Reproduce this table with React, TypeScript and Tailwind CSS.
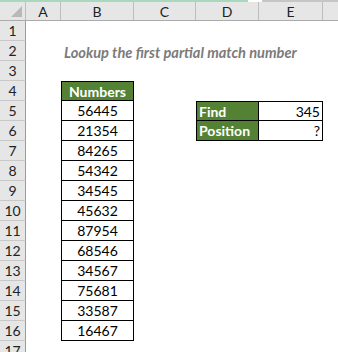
import React from 'react';

const numbers = ['56445', '21354', '84265', '54342', '34545', '45632', '87954', '68546', '34567', '75681', '33587', '16467'];

const font = { fontFamily: 'Lato, "Open Sans", sans-serif' };

function RowHead({ n }: { n: number }) {
  return (
    <div className="w-[26px] shrink-0 h-full flex items-center justify-center bg-[#e6e6e6] border-r border-b border-r-[#9b9b9b] border-b-[#c8c8c8] text-[14px] text-[#222]">
      {n}
    </div>
  );
}

export default function App() {
  const rows = Array.from({ length: 17 }, (_, i) => i + 1);

  return (
    <div className="w-[338px] h-[352px] overflow-hidden bg-white" style={font}>
      {/* top strip */}
      <div className="flex h-[2px]">
        <div className="w-[248px] bg-[#a9d8bd]" />
        <div className="w-[14px] bg-white" />
        <div className="flex-1 bg-[#c6c6c6]" />
      </div>

      {/* column header */}
      <div className="flex h-[19px] bg-[#e6e6e6] border-b border-[#ababab] text-[14px] text-[#222]">
        <div className="w-[26px] shrink-0 border-r border-[#bdbdbd] relative">
          <svg className="absolute right-[3px] bottom-[3px]" width="11" height="11" viewBox="0 0 11 11">
            <polygon points="11,0 11,11 0,11" fill="#b8b8b8" />
          </svg>
        </div>
        <div className="w-[35px] shrink-0 border-r border-[#bdbdbd] flex items-center justify-center">A</div>
        <div className="w-[73px] shrink-0 border-r border-[#bdbdbd] flex items-center justify-center">B</div>
        <div className="w-[62px] shrink-0 border-r border-[#bdbdbd] flex items-center justify-center">C</div>
        <div className="w-[63px] shrink-0 border-r border-[#bdbdbd] flex items-center justify-center">D</div>
        <div className="w-[64px] shrink-0 border-r border-[#bdbdbd] flex items-center justify-center">E</div>
        <div className="flex-1" />
      </div>

      {rows.map((n) => {
        const num = n >= 5 && n <= 16 ? numbers[n - 5] : null;
        return (
          <div key={n} className="flex h-[20px] text-[14px] text-black">
            <RowHead n={n} />
            {/* A */}
            <div className="w-[35px] shrink-0" />
            {/* B */}
            {n === 4 ? (
              <div className="w-[73px] shrink-0 h-full border border-black bg-[#548235] text-white font-bold flex items-center justify-center">
                Numbers
              </div>
            ) : num ? (
              <div className="w-[73px] shrink-0 h-full border-x border-b border-black flex items-center justify-center">
                {num}
              </div>
            ) : (
              <div className="w-[73px] shrink-0 relative">
                {n === 2 && (
                  <span className="absolute left-[3px] top-[1px] whitespace-nowrap italic font-bold text-[14.6px] text-[#7b7b7b]">
                    Lookup the first partial match number
                  </span>
                )}
              </div>
            )}
            {/* C */}
            <div className="w-[62px] shrink-0" />
            {/* D & E */}
            {n === 5 || n === 6 ? (
              <>
                <div
                  className={`w-[63px] shrink-0 h-full bg-[#548235] text-white font-bold flex items-center pl-[2px] border-x border-b border-black ${n === 5 ? 'border-t' : ''}`}
                >
                  {n === 5 ? 'Find' : 'Position'}
                </div>
                <div
                  className={`w-[64px] shrink-0 h-full flex items-center justify-end pr-[2px] border-r border-b border-black ${n === 5 ? 'border-t' : ''}`}
                >
                  {n === 5 ? '345' : '?'}
                </div>
              </>
            ) : (
              <>
                <div className="w-[63px] shrink-0" />
                <div className="w-[64px] shrink-0" />
              </>
            )}
            <div className="flex-1" />
          </div>
        );
      })}
    </div>
  );
}
